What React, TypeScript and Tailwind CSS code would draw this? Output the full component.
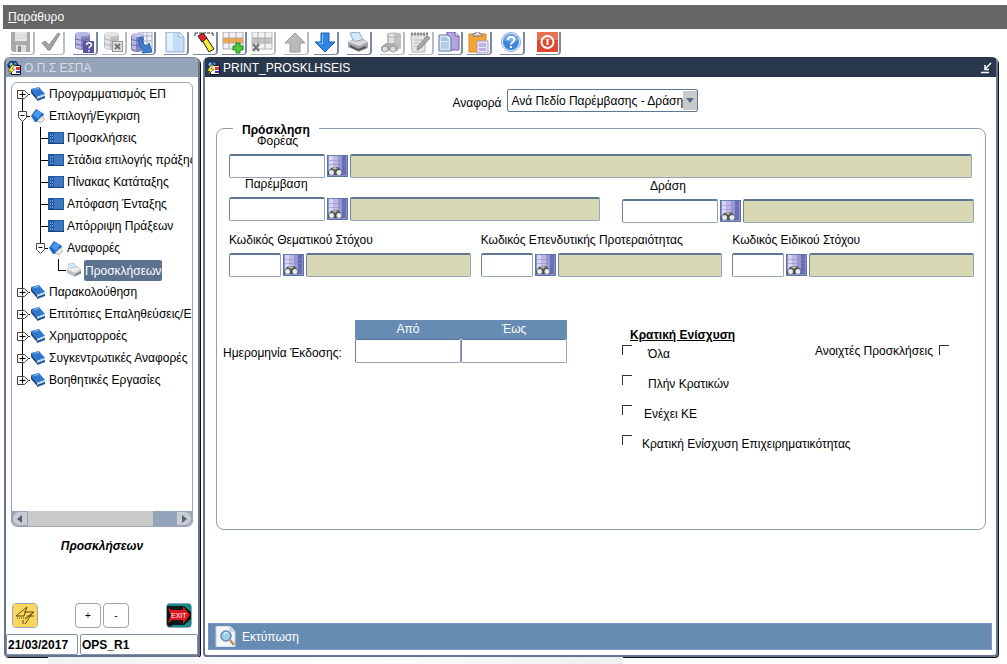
import { useState } from 'react';
import type { ReactNode } from 'react';

type TreeKind = 'book' | 'open' | 'form' | 'report';

interface TreeRow {
  label: string;
  level: number;
  kind: TreeKind;
  last?: boolean;
}

const TREE: TreeRow[] = [
  { label: 'Προγραμματισμός ΕΠ', level: 0, kind: 'book' },
  { label: 'Επιλογή/Εγκριση', level: 0, kind: 'open' },
  { label: 'Προσκλήσεις', level: 1, kind: 'form' },
  { label: 'Στάδια επιλογής πράξης', level: 1, kind: 'form' },
  { label: 'Πίνακας Κατάταξης', level: 1, kind: 'form' },
  { label: 'Απόφαση Ένταξης', level: 1, kind: 'form' },
  { label: 'Απόρριψη Πράξεων', level: 1, kind: 'form' },
  { label: 'Αναφορές', level: 1, kind: 'open', last: true },
  { label: 'Προσκλήσεων', level: 2, kind: 'report', last: true },
  { label: 'Παρακολούθηση', level: 0, kind: 'book' },
  { label: 'Επιτόπιες Επαληθεύσεις/Ε', level: 0, kind: 'book' },
  { label: 'Χρηματορροές', level: 0, kind: 'book' },
  { label: 'Συγκεντρωτικές Αναφορές', level: 0, kind: 'book' },
  { label: 'Βοηθητικές Εργασίες', level: 0, kind: 'book', last: true },
];

const AID_TYPES = [
  { id: 'aid-all', label: 'Όλα', pad: 'pl-4' },
  { id: 'aid-none', label: 'Πλήν Κρατικών', pad: 'pl-4' },
  { id: 'aid-ke', label: 'Ενέχει ΚΕ', pad: 'pl-3' },
  { id: 'aid-business', label: 'Κρατική Ενίσχυση Επιχειρηματικότητας', pad: 'pl-2.5' },
];

// --- Icons ---

function Icon({ children }: { children: ReactNode }) {
  return <svg viewBox="0 0 22 22" className="block w-[22px] h-[22px]" aria-hidden="true">{children}</svg>;
}

function SaveIcon() {
  return (
    <Icon>
      <path d="M1 0h19v20H3l-2-2z" fill="#aaa" />
      <path d="M5 0h12v9H5z" fill="#e6e6e6" />
      <path d="M5 3h12M5 6h12" stroke="#d0d0d0" />
      <path d="M6 13h10v7H6z" fill="#ddd" />
      <path d="M8 14h3v6H8z" fill="#888" />
    </Icon>
  );
}

function CheckIcon() {
  return (
    <Icon>
      <path d="M2 11l3-2 4 4L18 1l2 1L10 18H8z" fill="#a5a5a5" stroke="#8c8c8c" />
    </Icon>
  );
}

function Cylinder({ gray }: { gray?: boolean }) {
  const body = gray ? '#c4c4c4' : '#8384c0';
  const light = gray ? '#e4e4e4' : '#b9b9e4';
  const line = gray ? '#adadad' : '#6465a4';
  return (
    <>
      <path d="M2 2v13c0 4 15 4 15 0V2z" fill={body} />
      <path d="M3 3v13l5 1V4z" fill={light} />
      <path d="M2 6c3 3 12 3 15 0M2 11c3 3 12 3 15 0" fill="none" stroke={line} />
      <ellipse cx="9.5" cy="2" rx="7.5" ry="2.5" fill={light} />
    </>
  );
}

function QueryIcon() {
  return (
    <Icon>
      <Cylinder />
      <path d="M10 9h11v12H10z" fill="#55569b" />
      <path d="M13.5 13c0-3 5-3 5 0 0 1.5-2.5 1.5-2.5 3.5M16 18v1.5" fill="none" stroke="#fff" strokeWidth="1.5" />
    </Icon>
  );
}

function CancelQueryIcon() {
  return (
    <Icon>
      <Cylinder gray />
      <path d="M10 9h11v11H10z" fill="#999" />
      <path d="M11 10h9v9h-9z" fill="#ddd" />
      <path d="M13 12l5 5M18 12l-5 5" stroke="#777" strokeWidth="2" />
    </Icon>
  );
}

function RunQueryIcon() {
  return (
    <Icon>
      <path d="M8 0h13v17H8z" fill="#f3f4fa" stroke="#a3a8c8" />
      <path d="M12 0v15M16 0v15M8 4h13M8 9h13" stroke="#a3a8c8" />
      <path d="M0 3v14c0 4 13 4 13 0V3z" fill="#8384c0" />
      <path d="M1 4v13l4 1V5z" fill="#b9b9e4" />
      <path d="M0 7c3 2 10 2 13 0M0 12c3 2 10 2 13 0" fill="none" stroke="#6465a4" />
      <ellipse cx="6.5" cy="3" rx="6.5" ry="2" fill="#c3c3e8" />
      <path d="M11 5c0 6 2 8 5 9l2-3 3 9-10 1 2-3c-4-2-6-7-5-12z" fill="#3f7fd0" stroke="#2460a8" />
    </Icon>
  );
}

function PageIcon() {
  return (
    <Icon>
      <path d="M2 0h13l5 5v15H2z" fill="#c5dcf6" stroke="#8db0dc" />
      <path d="M3 1h6v18H3z" fill="#e3effc" />
      <path d="M15 0v5h5z" fill="#f7fbff" stroke="#8db0dc" />
    </Icon>
  );
}

function ClearIcon() {
  return (
    <Icon>
      <path d="M2 1h18M2 1v4M20 1v4" stroke="#333" fill="none" strokeDasharray="3 1" />
      <path d="M9 8l4-3 8 12-5 3z" fill="#ffe819" stroke="#222" />
      <path d="M11 7l7 11" stroke="#fff79a" />
      <path d="M5 4l5-3 4 5-5 4z" fill="#e8202a" stroke="#222" />
    </Icon>
  );
}

function GridIcon({ gray }: { gray?: boolean }) {
  return (
    <Icon>
      <path d="M1 0h20v17H1z" fill="#f2f2f6" stroke={gray ? '#bbb' : '#a9a9b9'} />
      <path d="M1 6h20v5H1z" fill={gray ? '#c4c4c4' : '#f3a646'} />
      <path d="M7 0v17M14 0v17M1 6h20M1 11h20" stroke={gray ? '#aaa' : '#b3a79f'} />
      {gray ? (
        <path d="M2 12l6 7M8 12l-6 7" stroke="#777" strokeWidth="2.5" />
      ) : (
        <path d="M14 11h4v3h3v4h-3v3h-4v-3h-3v-4h3z" fill="#52c93c" stroke="#23861b" />
      )}
    </Icon>
  );
}

function ArrowIcon({ down }: { down?: boolean }) {
  return (
    <Icon>
      {down ? (
        <>
          <path d="M7 1h8v9h6L11 20 1 10h6z" fill="#3385e4" stroke="#1b5eb2" />
          <path d="M8.5 2v9.5H5" stroke="#8dc2fa" fill="none" />
        </>
      ) : (
        <path d="M11 1l10 10h-5v9H6v-9H1z" fill="#bababa" stroke="#9a9a9a" />
      )}
    </Icon>
  );
}

function PrinterIcon() {
  return (
    <Icon>
      <path d="M3 1l9-1 4 8-9 2z" fill="#d6e9fb" stroke="#87a9d0" />
      <path d="M1 10l6-3 1 2 8-2 5 3v6l-9 4-11-5z" fill="#a4a4a8" />
      <path d="M1 10l6-2 1 2 8-2 5 2-9 4z" fill="#dadadc" />
      <path d="M3 14l8 4 8-3" stroke="#55565c" strokeWidth="2" fill="none" />
    </Icon>
  );
}

function FindIcon() {
  return (
    <Icon>
      <path d="M7 2c0-2 14-2 14 0v15H7z" fill="#c0c0c0" />
      <path d="M9 2h5v14H9z" fill="#e2e2e2" />
      <path d="M7 5h14" stroke="#b4b4b4" />
      <path d="M1 15l5-4h8l4 4v4H1z" fill="#adadad" />
      <circle cx="5" cy="17" r="3" fill="#ddd" stroke="#999" />
      <circle cx="13" cy="17" r="3" fill="#ddd" stroke="#999" />
    </Icon>
  );
}

function EditIcon() {
  return (
    <Icon>
      <path d="M2 2h14v18H3z" fill="#e4e4e4" stroke="#b4b4b4" />
      <path d="M2 2h18" stroke="#888" strokeWidth="3" strokeDasharray="2 1" />
      <path d="M5 8h8M5 11h5M5 14h4" stroke="#bbb" />
      <path d="M18 4l3 2-9 10-4 2 1-4z" fill="#a9a9a9" stroke="#888" />
    </Icon>
  );
}

function CopyIcon() {
  return (
    <Icon>
      <path d="M9 0h8l4 4v14H9z" fill="#b7a4dc" stroke="#715aa8" />
      <path d="M17 0v4h4" fill="#eee" stroke="#715aa8" />
      <path d="M1 3h9l3 3v13H1z" fill="#dce9f6" stroke="#5577a5" />
      <path d="M3 8h8M3 6h6" stroke="#7f9fc8" />
      <path d="M3 10h8v7H3z" fill="#b4cbe4" />
    </Icon>
  );
}

function PasteIcon() {
  return (
    <Icon>
      <path d="M2 2h17v18H2z" fill="#f5a437" stroke="#d88519" />
      <path d="M6 4h9V2l-3-1c0-2-3-2-3 0L6 2z" fill="#ddd" stroke="#777" />
      <path d="M10 9h11v12H10z" fill="#e9e4f6" stroke="#a99fc6" />
      <path d="M12 12h7M12 14h7" stroke="#8f82c0" />
      <path d="M12 16h7v3h-7z" fill="#bfb0e0" />
    </Icon>
  );
}

function HelpIcon() {
  return (
    <Icon>
      <circle cx="11" cy="10" r="9.5" fill="#e4eefa" stroke="#8ca6cc" />
      <circle cx="11" cy="10" r="8" fill="#3f86da" />
      <path d="M4 8c2-7 12-7 14 0-5 2-9 2-14 0" fill="#73adf0" />
      <path d="M8 8c0-4 6.5-4 6.5 0 0 2-3.5 2-3.5 4.5M11 14v2" fill="none" stroke="#fff" strokeWidth="2" />
    </Icon>
  );
}

function PowerIcon() {
  return (
    <Icon>
      <path d="M1 0h21v20H1z" fill="#dc4930" />
      <path d="M1 0h21v8H1z" fill="#ea7254" />
      <circle cx="11.5" cy="10" r="6" fill="none" stroke="#fff" strokeWidth="2" />
      <path d="M11.5 7v6" stroke="#fff" strokeWidth="2" />
    </Icon>
  );
}

function AppIcon() {
  return (
    <svg viewBox="0 0 16 16" className="block w-4 h-4 shrink-0" aria-hidden="true">
      <path d="M1 5l3-4h6l3 4-2 4H3z" fill="#1d2f78" />
      <path d="M3 4l3-2 1 3-2 2zM8 2l3 2-2 1z" fill="#70c4d0" />
      <path d="M5.500 5.500h9v9h-9z" fill="#fff" stroke="#111" />
      <path d="M10 7h4v3h-4z" fill="#e23333" />
      <path d="M10 12h4" stroke="#3737c0" strokeWidth="2" />
      <path d="M6 5L2 11h3l-2 4 6-6H6l3-4z" fill="#ffe92e" stroke="#333" strokeWidth=".5" />
    </svg>
  );
}

function LovIcon() {
  return (
    <svg viewBox="0 0 21 22" className="block w-full h-full" aria-hidden="true">
      <path d="M0 0h21v22H0z" fill="#8d92cc" />
      <path d="M2 1h4v15H2z" fill="#d9d6f4" />
      <path d="M6 1h5v15H6z" fill="#bcb8e6" />
      <path d="M11 1h4v17h-4z" fill="#9a96d2" />
      <path d="M15 1h4v19h-4z" fill="#6a6bb2" />
      <path d="M2 5.500h17M2 9.500h17" stroke="#8a88c8" strokeOpacity=".5" />
      <path d="M1 17l3-4 4-1h3l4 4v4H1z" fill="#4c5358" />
      <path d="M5 13l3-1 3 1-3 2z" fill="#b9b6a4" />
      <circle cx="4.500" cy="17.500" r="2.500" fill="#e4ecec" />
      <circle cx="12" cy="17.500" r="2.500" fill="#e4ecec" />
      <path d="M.5 0v21.500h20V.500z" fill="none" stroke="#55759f" />
    </svg>
  );
}

function NodeIcon({ kind }: { kind: TreeKind }) {
  return (
    <svg viewBox="0 0 16 16" className="block w-4 h-4 shrink-0" aria-hidden="true">
      {kind === 'book' && (
        <>
          <path d="M1 3l8-2 6 7-8 3z" fill="#2c77cf" />
          <path d="M1 3v4l6 7v-3z" fill="#174a91" />
          <path d="M7 11l8-3v3l-8 3z" fill="#c6d6ea" />
          <path d="M7 13l8-3v2l-8 3z" fill="#174a91" />
          <path d="M4 3.500l5-1" stroke="#8dbdf1" />
        </>
      )}
      {kind === 'open' && (
        <>
          <path d="M1 8l5-7 8 5-3 7-6 1z" fill="#1c67c4" />
          <path d="M3 7l4-5 5 3-4 6z" fill="#4a96e6" />
          <path d="M7 13l5-5 3 3-4 4z" fill="#e8e6dc" stroke="#8b8b88" strokeWidth=".5" />
        </>
      )}
      {kind === 'form' && (
        <>
          <path d="M0 2h16v12H0z" fill="#2158a5" />
          <path d="M6 3h9v10H6z" fill="#3b78bf" />
          <path d="M2 5h3M2 8h3M2 11h3" stroke="#c8dcf4" strokeDasharray="1 1" />
          <path d="M0 13.500h16" stroke="#173f7b" />
        </>
      )}
      {kind === 'report' && (
        <>
          <path d="M2 2l6-1 3 5-7 2z" fill="#d3e9f8" stroke="#8fb4cf" strokeWidth=".5" />
          <path d="M1 7l5-2 5-1 4 3v5l-6 3-8-4z" fill="#b9c1c6" />
          <path d="M1 7l5-1 5-1 4 2-6 4z" fill="#e7ecee" />
          <path d="M9 13l6-3" stroke="#555" />
        </>
      )}
    </svg>
  );
}

// One 18px wide cell of guide line, with a toggle when the node is a folder
function Guide({ draw, toggle, stub, from = 0, to = 22 }: { draw: boolean; toggle?: 'plus' | 'minus'; stub?: boolean; from?: number; to?: number }) {
  return (
    <svg viewBox="0 0 18 22" className="block w-[18px] h-[22px] shrink-0" aria-hidden="true">
      {draw && <path d={`M10.500 ${from}V${to}`} stroke="#000" />}
      {stub && <path d="M10 11.500h8" stroke="#000" />}
      {toggle === 'plus' && (
        <>
          <path d="M5.500 7.500h7l4 4-4 4h-7z" fill="#fff" stroke="#444" />
          <path d="M7.500 11.500h6M10.500 8.500v6" stroke="#000" />
        </>
      )}
      {toggle === 'minus' && (
        <>
          <path d="M6.500 6.500h8v6l-4 4-4-4z" fill="#fff" stroke="#444" />
          <path d="M8.500 10.500h4" stroke="#000" />
        </>
      )}
    </svg>
  );
}

function TreeItem({ row }: { row: TreeRow }) {
  const selected = row.kind === 'report';
  const toggle = row.kind === 'book' ? 'plus' : row.kind === 'open' ? 'minus' : undefined;
  const first = row === TREE[0];
  return (
    <li className="flex items-center h-[22px] whitespace-nowrap">
      {row.level > 0 && <Guide draw />}
      {row.level > 1 && <Guide draw={false} />}
      <Guide draw toggle={toggle} stub from={first ? 11 : 0} to={row.last ? 11 : 22} />
      <NodeIcon kind={row.kind} />
      <span className={selected ? 'ml-0.5 px-px h-[21px] leading-[22px] rounded-xs bg-[#5d7290] text-white' : 'ml-[3px]'}>
        {row.label}
      </span>
    </li>
  );
}

function ToolButton({ label, disabled, children }: { label: string; disabled?: boolean; children: ReactNode }) {
  return (
    <button
      type="button"
      aria-label={label}
      disabled={disabled}
      className={`w-[25px] -mr-px h-[23px] overflow-hidden rounded-br-sm border-r-2 border-b ${disabled ? 'border-[#b5bccb]' : 'border-[#7c89a3]'}`}
    >
      {children}
    </button>
  );
}

const FIELD = 'h-6 min-w-0 border rounded-xs border-t-[#5f7594] border-l-[#6f819e] border-r-[#97a3b7] border-b-[#97a3b7]';

interface LovFieldProps {
  id: string;
  label: string;
  labelPad?: string;
  codeWidth: string;
}

function LovField({ id, label, labelPad = '', codeWidth }: LovFieldProps) {
  return (
    <div className="flex flex-col gap-[7px]">
      <label htmlFor={id} className={`leading-3 whitespace-nowrap ${labelPad}`}>{label}</label>
      <div className="flex items-center gap-0.5">
        <input id={id} type="text" className={`${FIELD} ${codeWidth} px-1 bg-white shrink-0 border-t-2`} />
        <button type="button" aria-label={`Λίστα τιμών: ${label}`} className="w-[21px] h-[22px] shrink-0">
          <LovIcon />
        </button>
        <input type="text" readOnly aria-label={`Περιγραφή: ${label}`} className={`${FIELD} flex-1 px-1 bg-[#d8d8b4] border-t-2`} />
      </div>
    </div>
  );
}

function Toolbar() {
  return (
    <div className="flex items-start gap-[9px] h-7 pl-[10px] pt-[3px]">
      <div className="flex gap-1.5">
        <ToolButton label="Αποθήκευση" disabled><SaveIcon /></ToolButton>
        <ToolButton label="Αποδοχή" disabled><CheckIcon /></ToolButton>
      </div>
      <div className="flex gap-[5px]">
        <ToolButton label="Ερώτημα"><QueryIcon /></ToolButton>
        <ToolButton label="Ακύρωση ερωτήματος" disabled><CancelQueryIcon /></ToolButton>
        <ToolButton label="Εκτέλεση ερωτήματος"><RunQueryIcon /></ToolButton>
      </div>
      <div className="flex gap-[5px]">
        <ToolButton label="Νέο"><PageIcon /></ToolButton>
        <ToolButton label="Καθαρισμός"><ClearIcon /></ToolButton>
        <ToolButton label="Εισαγωγή εγγραφής"><GridIcon /></ToolButton>
        <ToolButton label="Διαγραφή εγγραφής" disabled><GridIcon gray /></ToolButton>
      </div>
      <div className="flex gap-1.5">
        <ToolButton label="Προηγούμενη" disabled><ArrowIcon /></ToolButton>
        <ToolButton label="Επόμενη"><ArrowIcon down /></ToolButton>
      </div>
      <ToolButton label="Εκτύπωση οθόνης"><PrinterIcon /></ToolButton>
      <div className="flex gap-[5px]">
        <ToolButton label="Αναζήτηση" disabled><FindIcon /></ToolButton>
        <ToolButton label="Επεξεργασία" disabled><EditIcon /></ToolButton>
        <ToolButton label="Αντιγραφή"><CopyIcon /></ToolButton>
        <ToolButton label="Επικόλληση"><PasteIcon /></ToolButton>
      </div>
      <ToolButton label="Βοήθεια"><HelpIcon /></ToolButton>
      <div className="pl-[3px]">
        <ToolButton label="Έξοδος"><PowerIcon /></ToolButton>
      </div>
    </div>
  );
}

function NavigatorWindow() {
  return (
    <aside className="flex flex-col w-[196px] shrink-0 rounded-t-md rounded-b-sm border-2 border-[#64748f] border-t border-t-[#7e8ca5] shadow-[1px_1px_0_#111]">
      <header className="flex items-center gap-0.5 h-[19px] rounded-t bg-[#95a3b9] text-[#d5dbe5]">
        <AppIcon />
        <h2>Ο.Π.Σ ΕΣΠΑ</h2>
      </header>
      <div className="flex flex-col flex-1 mx-[5px] mt-[5px] rounded-md border border-[#98a4b8] overflow-hidden">
        <ul className="flex-1">
          {TREE.map((row, i) => <TreeItem key={i} row={row} />)}
        </ul>
        <div className="flex h-[15px] bg-[#93a4bb]">
          <button type="button" aria-label="Κύλιση αριστερά" className="flex items-center justify-center w-4 rounded-l-full bg-[#c9ccd2] border border-[#98a4b8]">
            <svg viewBox="0 0 6 8" className="w-1.5 h-2"><path d="M5 0v8L0 4z" fill="#555f6e" /></svg>
          </button>
          <div className="w-[125px] bg-[#cacaca]" />
          <div className="flex-1" />
          <button type="button" aria-label="Κύλιση δεξιά" className="flex items-center justify-center w-4 rounded-r-full bg-[#c9ccd2] border border-[#98a4b8]">
            <svg viewBox="0 0 6 8" className="w-1.5 h-2"><path d="M1 0v8l5-4z" fill="#555f6e" /></svg>
          </button>
        </div>
      </div>
      <p className="mt-[11px] leading-4 text-center font-bold italic">Προσκλήσεων</p>
      <div className="flex items-center mt-[49px] mx-1.5">
        <button type="button" aria-label="Σύνδεση" className="w-[26px] h-[25px] rounded-sm border border-[#98a4b8] overflow-hidden">
          <svg viewBox="0 0 24 23" className="block w-full h-full">
            <path d="M0 0h24v23H0z" fill="#fbd65c" />
            <path d="M14 3L3 12h8l3-9M11 8h10l-9 7M14 12h7M20 8l-8 12M10 20v-4" fill="none" stroke="#5f4a16" />
            <path d="M4 14h9" stroke="#5f4a16" strokeDasharray="1 1" />
          </svg>
        </button>
        <div className="flex gap-0.5 ml-[37px] text-[10px]">
          <button type="button" className="w-[26px] h-[25px] rounded-sm border border-[#98a4b8]">+</button>
          <button type="button" className="w-[26px] h-[25px] rounded-sm border border-[#98a4b8]">-</button>
        </div>
        <button type="button" aria-label="Exit" className="w-[26px] h-[25px] ml-auto rounded-sm border border-[#98a4b8] overflow-hidden">
          <svg viewBox="0 0 24 23" className="block w-full h-full">
            <path d="M0 0h24v23H0z" fill="#0c1716" />
            <path d="M0 0h24v2H0zM17 2l7 6V2zM17 21l7-6v8H2l5-2z" fill="#168a86" />
            <path d="M1 4l4 2h11V2l7 9-7 9v-4H5l-4 3 3-8z" fill="#e0161e" />
            <text x="4" y="14" fill="#fff" fontSize="7">EXIT</text>
          </svg>
        </button>
      </div>
      <div className="flex gap-0.5 mt-1.5 font-bold">
        <input readOnly aria-label="Ημερομηνία" value="21/03/2017" className="w-[72px] h-[21px] px-px border border-[#8593aa] rounded-xs" />
        <input readOnly aria-label="Χρήστης" value="OPS_R1" className="flex-1 min-w-0 h-[21px] px-px border border-[#8593aa] rounded-xs" />
      </div>
    </aside>
  );
}

function ReportWindow() {
  const [report, setReport] = useState('paremvasi');
  return (
    <main className="flex flex-col flex-1 min-w-0 rounded-t-md rounded-b-sm border-2 border-[#64748f] border-t border-t-[#2a384d] shadow-[1px_1px_0_#111]">
      <header className="flex items-center gap-0.5 h-[19px] pr-1 bg-[#2a384d] text-white">
        <AppIcon />
        <h1>PRINT_PROSKLHSEIS</h1>
        <button type="button" aria-label="Ελαχιστοποίηση" className="ml-auto">
          <svg viewBox="0 0 11 12" className="block w-[11px] h-3">
            <path d="M0 10.500h8M10 1L4 7M4 3v4.500h4" fill="none" stroke="#fff" strokeWidth="1.500" />
          </svg>
        </button>
      </header>

      <div className="flex items-center justify-center gap-1.5 mt-3">
        <label htmlFor="report" className="pt-1">Αναφορά</label>
        <div className="relative mr-[50px]">
          <select
            id="report"
            value={report}
            onChange={(e) => setReport(e.target.value)}
            className="block w-[191px] h-[23px] pl-[3px] pr-3 appearance-none bg-white border border-[#5f7594] rounded-xs"
          >
            <option value="paremvasi">Ανά Πεδίο Παρέμβασης - Δράση</option>
          </select>
          <span className="absolute right-px top-[2px] flex items-center justify-center w-3.5 h-[19px] bg-[#c9c9cc] pointer-events-none">
            <svg viewBox="0 0 8 5" className="w-2 h-[5px]"><path d="M0 0h8L4 5z" fill="#5b6b85" /></svg>
          </span>
        </div>
      </div>

      {/* Call filters */}
      <fieldset className="flex-1 min-w-0 mt-3 ml-[11px] mr-[10px] border border-[#8fa0b5] rounded-lg">
        <legend className="h-2 ml-4 px-[9px] leading-3 font-bold">Πρόσκληση</legend>
        <div className="pl-3 pr-[13px] pt-[3px]">
          <LovField id="foreas" label="Φορέας" labelPad="pl-7" codeWidth="w-24" />
        </div>
        <div className="grid grid-cols-[371fr_352fr] gap-[22px] pl-3 pr-[11px]">
          <LovField id="paremvasi" label="Παρέμβαση" labelPad="pl-4" codeWidth="w-24" />
          <div className="pt-0.5">
            <LovField id="drasi" label="Δράση" labelPad="pl-7" codeWidth="w-24" />
          </div>
        </div>
        <div className="grid grid-cols-3 gap-[10px] mt-[11px] pl-3 pr-[11px]">
          <LovField id="thematikos" label="Κωδικός Θεματικού Στόχου" codeWidth="w-[52px]" />
          <LovField id="proteraiotita" label="Κωδικός Επενδυτικής Προτεραιότητας" codeWidth="w-[52px]" />
          <LovField id="eidikos" label="Κωδικός Ειδικού Στόχου" codeWidth="w-[52px]" />
        </div>

        <div className="flex items-start mt-[43px] pl-1.5 pr-9">
          <span className="w-[132px] pt-[25px] shrink-0 whitespace-nowrap">Ημερομηνία Έκδοσης:</span>
          <div className="grid grid-cols-2 w-[212px] shrink-0 text-center">
            <label htmlFor="date-from" className="h-[19px] leading-[19px] bg-[#668cb3] text-white">Από</label>
            <label htmlFor="date-to" className="h-[19px] leading-[19px] bg-[#668cb3] text-white">Έως</label>
            <input id="date-from" type="text" className={`${FIELD} px-1`} />
            <input id="date-to" type="text" className={`${FIELD} px-1`} />
          </div>
          <div className="w-[240px] ml-[55px] pt-[7px] shrink-0">
            <h3 className="pl-2 leading-4 font-bold underline">Κρατική Ενίσχυση</h3>
            <div className="flex flex-col gap-[15px] mt-0.5">
              {AID_TYPES.map((aid) => (
                <div key={aid.id} className="flex items-start h-[15px]">
                  <input id={aid.id} type="checkbox" className="size-2.5 appearance-none border-t border-l border-[#333]" />
                  <label htmlFor={aid.id} className={`pt-[3px] leading-3 whitespace-nowrap ${aid.pad}`}>{aid.label}</label>
                </div>
              ))}
            </div>
          </div>
          <div className="flex items-start justify-end gap-1.5 flex-1 min-w-0 pt-[25px]">
            <label htmlFor="open-calls" className="leading-3 whitespace-nowrap">Ανοιχτές Προσκλήσεις</label>
            <input id="open-calls" type="checkbox" className="size-2.5 shrink-0 appearance-none border-t border-l border-[#333]" />
          </div>
        </div>
      </fieldset>

      <footer className="mt-[93px] ml-[3px] mr-1 mb-[5px] bg-[#668cb3] border border-[#7f92cc]">
        <button type="button" className="flex items-center gap-1.5 h-[25px] pl-1.5 text-white">
          <svg viewBox="0 0 21 21" className="w-[21px] h-[21px]" aria-hidden="true">
            <path d="M1 0h14l5 5v16H1z" fill="#f3f7fb" stroke="#c2d0df" />
            <path d="M15 0v5h5" fill="#d5e0eb" stroke="#b1c2d4" />
            <circle cx="11" cy="10" r="5" fill="#9fd0ee" stroke="#6a89a8" strokeWidth="1.500" />
            <path d="M9 8c1-2 3-2 4-1" fill="none" stroke="#fff" />
            <path d="M15 14l4 5" stroke="#c98a5c" strokeWidth="2.500" />
          </svg>
          Εκτύπωση
        </button>
      </footer>
    </main>
  );
}

export default function App() {
  return (
    <div className="flex flex-col min-h-screen pt-[5px] bg-white text-black text-xs font-['Liberation_Sans',Arial,sans-serif]">
      <nav className="flex items-center h-6 ml-[3px] px-[5px] bg-[#666] text-white">
        <button type="button"><span className="underline">Π</span>αράθυρο</button>
      </nav>
      <Toolbar />
      <div className="flex flex-1 gap-[3px] pl-1 pr-[9px]">
        <NavigatorWindow />
        <ReportWindow />
      </div>
      <div className="h-[7px] ml-12 mr-96 bg-linear-to-r from-[#f1f1f1] via-white to-[#efefef]" />
    </div>
  );
}
